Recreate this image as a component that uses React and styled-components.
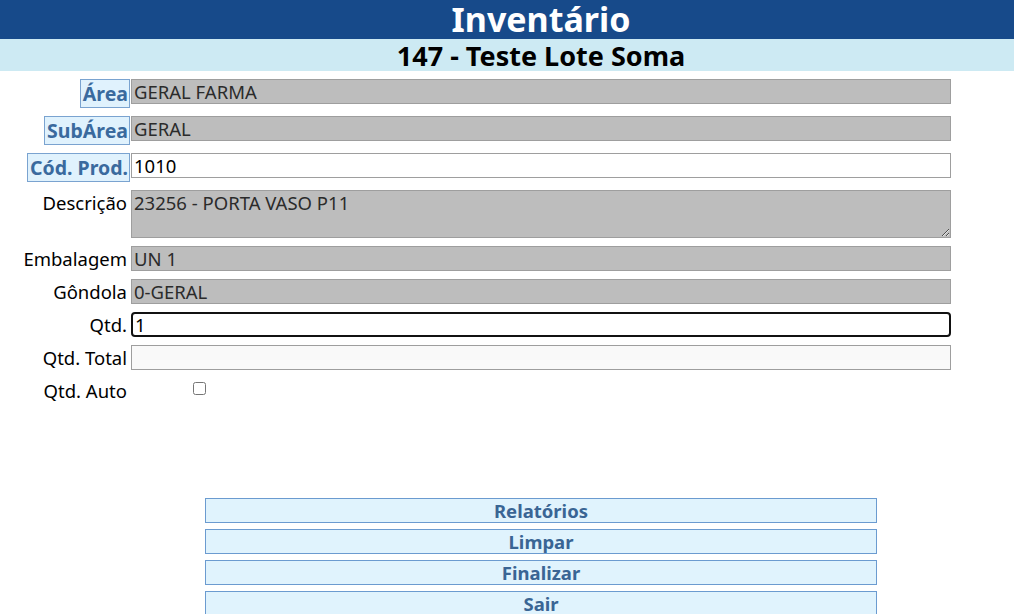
import React from 'react'
import styled, { createGlobalStyle } from 'styled-components'

const GlobalStyle = createGlobalStyle`
  html, body {
    margin: 0;
    padding: 0;
    overflow: hidden;
    background: #fff;
  }
  body {
    font-family: "Noto Sans", "Open Sans", sans-serif;
    color: #000;
  }
`

const Page = styled.div`
  width: 100%;
`

// the original page centres its heading and buttons on a column that is
// 68px wider than the window, so the centre line sits at x=541
const TopBar = styled.div`
  background: #174a8a;
  height: 39px;
  padding-left: 68px;
  color: #fff;
  font-size: 34px;
  font-weight: 700;
  text-align: center;
  line-height: 38px;
  white-space: nowrap;
`

const SubBar = styled.div`
  background: #cdeaf3;
  height: 32px;
  padding-left: 68px;
  font-size: 27px;
  font-weight: 700;
  text-align: center;
  line-height: 33px;
  white-space: nowrap;
`

const Form = styled.div`
  display: flex;
  flex-direction: column;
  gap: 8px;
  padding-top: 8px;
`

const Row = styled.div`
  display: grid;
  grid-template-columns: 130px 820px;
  column-gap: 1px;
  align-items: start;
`

const Label = styled.div`
  justify-self: end;
  font-size: 18.5px;
  line-height: 25px;
  padding-right: 3px;
  white-space: nowrap;
`

const LabelButton = styled.div`
  justify-self: end;
  box-sizing: border-box;
  height: 29px;
  padding: 0 1px 0 2px;
  background: #e0f2fd;
  border: 1px solid #7aa3d0;
  color: #3a6a9e;
  font-size: 19.5px;
  font-weight: 700;
  line-height: 27px;
  white-space: nowrap;
`

const Field = styled.input`
  box-sizing: border-box;
  width: 820px;
  height: 25px;
  margin: 0;
  padding: 0 2px;
  font-family: "Noto Sans", "Open Sans", sans-serif;
  font-size: 18.5px;
  color: ${p => (p.$locked ? '#2b2b2b' : '#000')};
  background: ${p => (p.$locked ? '#bdbdbd' : p.$soft ? '#f9f9f9' : '#fff')};
  border: ${p => (p.$active ? '2px solid #111' : '1px solid #9e9e9e')};
  border-radius: ${p => (p.$active ? '4px' : '0')};
  outline: none;
  &:disabled {
    opacity: 1;
    -webkit-text-fill-color: #2b2b2b;
  }
`

const Memo = styled.textarea`
  box-sizing: border-box;
  width: 820px;
  height: 48px;
  margin: 0;
  padding: 0 2px;
  font-family: "Noto Sans", "Open Sans", sans-serif;
  font-size: 18.5px;
  line-height: 24px;
  color: #2b2b2b;
  background: #bdbdbd;
  border: 1px solid #9e9e9e;
  outline: none;
  display: block;
`

const Check = styled.input`
  margin: 4px 0 0 62px;
  width: 13px;
  height: 13px;
`

const Buttons = styled.div`
  display: flex;
  flex-direction: column;
  align-items: center;
  gap: 6px;
  margin-top: 95px;
  padding-left: 68px;
`

const ActionButton = styled.button`
  box-sizing: border-box;
  width: 672px;
  height: 25px;
  margin: 0;
  padding: 0;
  background: #e0f3fd;
  border: 1px solid #6b9bd0;
  color: #3a6594;
  font-family: "Noto Sans", "Open Sans", sans-serif;
  font-size: 18.5px;
  font-weight: 700;
  line-height: 23px;
  cursor: pointer;
`

export default function App() {
  return (
    <Page>
      <GlobalStyle />
      <TopBar>Inventário</TopBar>
      <SubBar>147 - Teste Lote Soma</SubBar>
      <Form>
        <Row>
          <LabelButton>Área</LabelButton>
          <Field $locked disabled defaultValue="GERAL FARMA" />
        </Row>
        <Row>
          <LabelButton>SubÁrea</LabelButton>
          <Field $locked disabled defaultValue="GERAL" />
        </Row>
        <Row>
          <LabelButton>Cód. Prod.</LabelButton>
          <Field defaultValue="1010" />
        </Row>
        <Row>
          <Label>Descrição</Label>
          <Memo readOnly defaultValue="23256 - PORTA VASO P11" />
        </Row>
        <Row>
          <Label>Embalagem</Label>
          <Field $locked disabled defaultValue="UN 1" />
        </Row>
        <Row>
          <Label>Gôndola</Label>
          <Field $locked disabled defaultValue="0-GERAL" />
        </Row>
        <Row>
          <Label>Qtd.</Label>
          <Field $active defaultValue="1" />
        </Row>
        <Row>
          <Label>Qtd. Total</Label>
          <Field $soft readOnly defaultValue="" />
        </Row>
        <Row>
          <Label>Qtd. Auto</Label>
          <div><Check type="checkbox" /></div>
        </Row>
      </Form>
      <Buttons>
        <ActionButton>Relatórios</ActionButton>
        <ActionButton>Limpar</ActionButton>
        <ActionButton>Finalizar</ActionButton>
        <ActionButton>Sair</ActionButton>
      </Buttons>
    </Page>
  )
}
